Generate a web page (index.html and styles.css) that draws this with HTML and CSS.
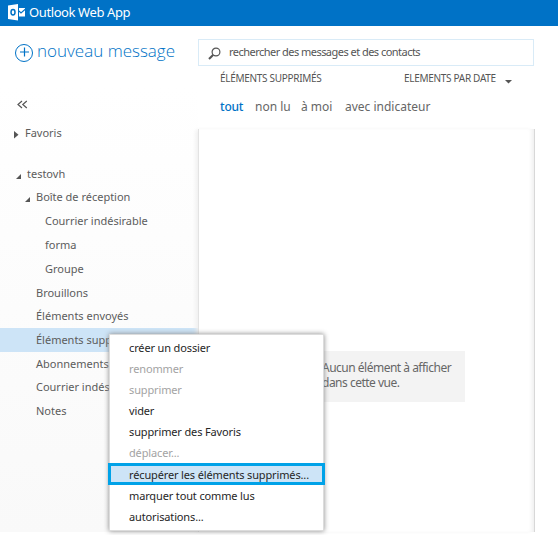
FILE: index.html
```html
<!DOCTYPE html>
<html lang="fr">
<head>
<meta charset="utf-8">
<title>Outlook Web App</title>
<link rel="stylesheet" href="styles.css">
</head>
<body>
<header class="topbar">
  <svg class="logo" width="18" height="18" viewBox="0 0 18 18">
    <path fill="#fff" d="M0 1.6 10 0v16.6L0 15z"/>
    <path fill="#fff" d="M11 4h6v8.5h-6z"/>
    <ellipse cx="5" cy="8.3" rx="2" ry="2.7" fill="none" stroke="#0072c6" stroke-width="1.5"/>
    <path fill="none" stroke="#0072c6" stroke-width="1.1" d="M11 7l2 2 4.5-4"/>
  </svg>
  <span class="brand">Outlook Web App</span>
</header>
<div class="app">
  <aside class="sidebar">
    <div class="compose">
      <svg width="19" height="19" viewBox="0 0 19 19" fill="none" stroke="#0072c6">
        <circle cx="9" cy="9" r="8.5" stroke-width="1"/>
        <path d="M9.5 3.5v9M5 8h9" stroke-width="1.2"/>
      </svg>
      <span>nouveau message</span>
    </div>
    <div class="collapse">
      <svg width="11" height="9" viewBox="0 0 11 9" fill="none" stroke="#555" stroke-width="1.2"><path d="M5 1 1 4.5 5 8M9.8 1 5.8 4.5l4 3.5"/></svg>
    </div>
    <nav class="tree">
      <div class="row favorites"><svg class="arrow" width="5" height="8"><path d="M0 0l4.5 3.7L0 7.5z"/></svg><span>Favoris</span></div>
      <div class="row account"><svg class="arrow" width="5" height="5"><path d="M5 0v5H0z"/></svg><span>testovh</span></div>
      <div class="row inbox"><svg class="arrow" width="5" height="5"><path d="M5 0v5H0z"/></svg><span>Boîte de réception</span></div>
      <div class="row sub">Courrier indésirable</div>
      <div class="row sub">forma</div>
      <div class="row sub">Groupe</div>
      <div class="row folder">Brouillons</div>
      <div class="row folder short">Éléments envoyés</div>
      <div class="row folder selected">Éléments supprimés</div>
      <div class="row folder">Abonnements</div>
      <div class="row folder short">Courrier indésirable</div>
      <div class="row folder">Notes</div>
    </nav>
  </aside>
  <main class="content">
    <div class="search">
      <svg width="14" height="14" viewBox="0 0 14 14" fill="none" stroke="#555"><circle cx="8" cy="5" r="3.9" stroke-width="1.2"/><path d="M5.3 7.7 1 12" stroke-width="2"/></svg>
      <span>rechercher des messages et des contacts</span>
    </div>
    <div class="listhead">
      <span class="title">ÉLÉMENTS SUPPRIMÉS</span>
      <span class="sort">ELEMENTS PAR DATE</span>
      <svg width="7" height="4"><path fill="#555" d="M0 0h7L3.5 3.6z"/></svg>
    </div>
    <div class="filters">
      <span class="on">tout</span><span class="unread">non lu</span><span class="me">à moi</span><span class="flag">avec indicateur</span>
    </div>
    <section class="list">
      <div class="empty">Aucun élément à afficher<br>dans cette vue.</div>
    </section>
  </main>
</div>
<div class="menu">
  <div class="item">créer un dossier</div>
  <div class="item off">renommer</div>
  <div class="item off">supprimer</div>
  <div class="item">vider</div>
  <div class="item">supprimer des Favoris</div>
  <div class="item off">déplacer...</div>
  <div class="item active">récupérer les éléments supprimés...</div>
  <div class="item">marquer tout comme lus</div>
  <div class="item">autorisations...</div>
</div>
</body>
</html>
```
FILE: styles.css
```css
* { box-sizing: border-box; }
body {
  margin: 0;
  height: 535px;
  overflow: hidden;
  position: relative;
  background: #fff;
  color: #555;
  font-family: "Noto Sans", "Open Sans", sans-serif;
  font-size: 11px;
  white-space: nowrap;
}
.topbar {
  height: 26px;
  background: #0072c6;
  color: #fff;
  display: flex;
  padding: 4px 0 0 8px;
}
.brand { margin-left: 3px; font-size: 13px; line-height: 17px; letter-spacing: -.4px; }
.app { display: flex; height: 506px; }
.sidebar {
  width: 198px;
  background: linear-gradient(#fff 60px, #f9f9f9);
}
.compose {
  display: flex;
  height: 54px;
  padding: 18px 0 0 15px;
  color: #0072c6;
  font-size: 17px;
}
.compose span { margin-left: 3px; line-height: 14px; font-family: "Open Sans", sans-serif; font-weight: 300; letter-spacing: 0; }
.collapse { height: 41px; padding: 18px 0 0 17px; line-height: 16px; }
.collapse svg { display: block; margin-top: 2px; }
.row {
  display: flex;
  align-items: center;
  height: 24px;
  padding-bottom: 2px;
  color: #5c5c5c;
  letter-spacing: -.01px;
}
.arrow { fill: #555; margin-top: 6px; }
.favorites { padding-left: 14px; margin-bottom: 18px; }
.favorites span { margin-left: 6px; }
.account { padding-left: 16px; height: 22px; }
.account span { margin-left: 6px; }
.inbox { padding-left: 25px; }
.inbox span { margin-left: 6px; }
.sub { padding-left: 45px; }
.folder { padding-left: 36px; }
.short { height: 23px; }
.selected { background: #cde4f7; }
.content { width: 338px; }
.search {
  width: 336px;
  height: 27px;
  margin-top: 13px;
  border: 1px solid #d9ebf7;
  display: flex;
  padding: 7px 0 0 9px;
}
.search span { margin-left: 7px; line-height: 9px; letter-spacing: -.53px; }
.listhead { display: flex; height: 25px; padding: 5px 0 0 22px; font-size: 10px; line-height: 15px; letter-spacing: -.3px; }
.title { width: 184px; }
.sort { width: 101px; }
.listhead svg { margin-top: 9px; }
.filters { display: flex; height: 38px; padding: 8px 0 0 22px; font-size: 12px; line-height: 16px; color: #666; }
.on { width: 35px; color: #0072c6; font-weight: 500; letter-spacing: -.2px; }
.unread { width: 46px; }
.me { width: 44px; }
.list {
  height: 403px;
  width: 337px;
  border-right: 1px solid #d8d8d8;
  border-left: 1px solid #e3e3e3;
  box-shadow: -3px 0 4px -1px #eee, inset -4px 0 4px -2px #eee;
  padding-top: 222px;
}
.empty {
  width: 199px;
  height: 51px;
  margin-left: 67px;
  padding: 9px 0 0 56px;
  background: #f3f3f3;
  font-size: 12px;
  line-height: 15px;
  letter-spacing: -.5px;
  color: #666;
}
.menu {
  position: absolute;
  left: 109px;
  top: 334px;
  width: 215px;
  height: 197px;
  padding-top: 2px;
  background: #fff;
  border: 1px solid #dcdcdc;
  box-shadow: 0 0 5px #888;
  color: #262626;
}
.item { height: 21px; line-height: 21px; padding-left: 19px; letter-spacing: -.14px; }
.off { color: #a3a3a3; }
.active {
  height: 22px;
  line-height: 17px;
  margin: 0 -2px;
  padding-left: 18px;
  background: #cde4f7;
  border: 3px solid #00a2e8;
}
```
